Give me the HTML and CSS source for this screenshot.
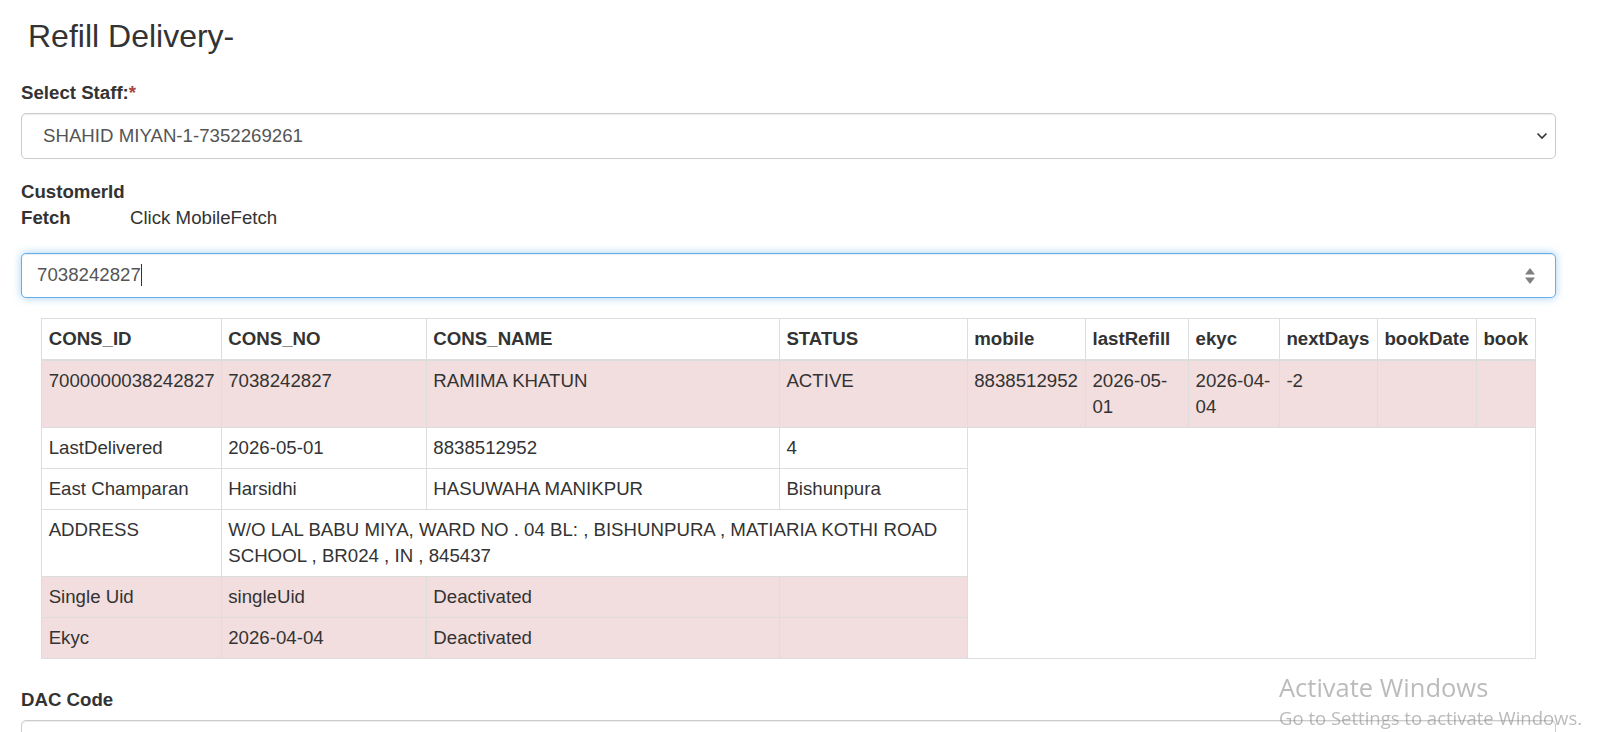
FILE: index.html
```html
<!DOCTYPE html>
<html lang="en">

<head>
    <meta charset="UTF-8">
    <meta name="viewport" content="width=device-width, initial-scale=1.0">
    <title>Refill Delivery</title>
    <link rel="stylesheet" href="styles.css">
</head>

<body>
    <div class="container">
        <h3 class="page-title">Refill Delivery-</h3>

        <div class="form-group">
            <label>Select Staff:<span class="req">*</span></label>
            <div class="select-wrap">
                <select class="form-control">
                    <option>SHAHID MIYAN-1-7352269261</option>
                </select>
                <svg class="select-arrow" width="12" height="8" viewBox="0 0 12 8">
                    <path d="M1.5 1.5 L6 6 L10.5 1.5" fill="none" stroke="#333" stroke-width="1.6" />
                </svg>
            </div>
        </div>

        <div class="fetch-block">
            <label>CustomerId</label>
            <div class="fetch-row">
                <label>Fetch</label>
                <span>Click MobileFetch</span>
            </div>
        </div>

        <div class="form-control focused">
            <span>7038242827</span><span class="caret"></span>
            <svg class="spin" width="12" height="22" viewBox="0 0 12 22">
                <path d="M1 9.5 L6 3 L11 9.5 Z" fill="#808080" />
                <path d="M1 12.5 L6 19 L11 12.5 Z" fill="#808080" />
            </svg>
        </div>

        <div class="table-wrap">
            <table class="cons-table">
                <colgroup>
                    <col style="width: 12.02%">
                    <col style="width: 13.73%">
                    <col style="width: 23.63%">
                    <col style="width: 12.57%">
                    <col style="width: 7.92%">
                    <col style="width: 6.90%">
                    <col style="width: 6.08%">
                    <col style="width: 6.56%">
                    <col style="width: 6.63%">
                    <col style="width: 3.96%">
                </colgroup>
                <thead>
                    <tr>
                        <th>CONS_ID</th>
                        <th>CONS_NO</th>
                        <th>CONS_NAME</th>
                        <th>STATUS</th>
                        <th>mobile</th>
                        <th>lastRefill</th>
                        <th>ekyc</th>
                        <th>nextDays</th>
                        <th>bookDate</th>
                        <th>book</th>
                    </tr>
                </thead>
                <tbody>
                    <tr class="danger">
                        <td>7000000038242827</td>
                        <td>7038242827</td>
                        <td>RAMIMA KHATUN</td>
                        <td>ACTIVE</td>
                        <td>8838512952</td>
                        <td>2026-05-01</td>
                        <td>2026-04-04</td>
                        <td>-2</td>
                        <td></td>
                        <td></td>
                    </tr>
                    <tr>
                        <td>LastDelivered</td>
                        <td>2026-05-01</td>
                        <td>8838512952</td>
                        <td>4</td>
                    </tr>
                    <tr>
                        <td>East Champaran</td>
                        <td>Harsidhi</td>
                        <td>HASUWAHA MANIKPUR</td>
                        <td>Bishunpura</td>
                    </tr>
                    <tr>
                        <td>ADDRESS</td>
                        <td colspan="3">W/O LAL BABU MIYA, WARD NO . 04 BL: , BISHUNPURA , MATIARIA KOTHI ROAD SCHOOL , BR024 , IN , 845437</td>
                    </tr>
                    <tr class="danger">
                        <td>Single Uid</td>
                        <td>singleUid</td>
                        <td>Deactivated</td>
                        <td></td>
                    </tr>
                    <tr class="danger">
                        <td>Ekyc</td>
                        <td>2026-04-04</td>
                        <td>Deactivated</td>
                        <td></td>
                    </tr>
                </tbody>
            </table>
        </div>

        <div class="form-group">
            <label>DAC Code</label>
            <div class="form-control"></div>
        </div>
    </div>

    <div class="watermark">
        <div class="wm-title">Activate Windows</div>
        <div class="wm-sub">Go to Settings to activate Windows.</div>
    </div>
</body>

</html>
```

FILE: styles.css
```css
* {
    margin: 0;
    padding: 0;
    box-sizing: border-box;
}

body {
    font-family: "Liberation Sans", Arial, sans-serif;
    font-size: 18.67px;
    line-height: 26.67px;
    color: #333;
    background-color: white;
    overflow: hidden;
}

.container {
    padding: 0 44px 0 21px;
}

.page-title {
    font-size: 32px;
    font-weight: 400;
    line-height: 35px;
    padding: 19px 0 0 7px;
    margin-bottom: 26px;
}

label {
    display: inline-block;
    font-weight: 700;
    margin-bottom: 6.67px;
}

.req {
    color: #a94442;
}

.form-group {
    margin-bottom: 20px;
}

.form-control {
    display: block;
    width: 100%;
    height: 45.33px;
    padding: 8px 15px;
    font-family: "Liberation Sans", Arial, sans-serif;
    font-size: 18.67px;
    line-height: 26.67px;
    color: #555;
    background-color: white;
    border: 1px solid #ccc;
    border-radius: 5px;
    box-shadow: inset 0 1px 1px rgba(0, 0, 0, 0.075);
}

.select-wrap {
    position: relative;
}

.select-wrap select {
    appearance: none;
    -webkit-appearance: none;
    padding-left: 21px;
}

.select-arrow {
    position: absolute;
    right: 8px;
    top: 19px;
}

.fetch-block {
    margin-bottom: 21px;
}

.fetch-block label {
    display: block;
    margin-bottom: 0;
}

.fetch-row {
    display: flex;
}

.fetch-row label {
    width: 109px;
}

.focused {
    position: relative;
    border-color: #66afe9;
    box-shadow: inset 0 1px 1px rgba(0, 0, 0, 0.075), 0 0 8px rgba(102, 175, 233, 0.6);
}

.caret {
    display: inline-block;
    width: 1px;
    height: 22px;
    background-color: #333;
    vertical-align: -5px;
}

.spin {
    position: absolute;
    right: 19px;
    top: 11px;
}

.table-wrap {
    padding: 20px 20px 28px;
}

.cons-table {
    width: 100%;
    table-layout: fixed;
    border-collapse: collapse;
    border: 1px solid #ddd;
}

.cons-table th,
.cons-table td {
    padding: 6.67px 6.67px 6.4px;
    text-align: left;
    vertical-align: top;
    border: 1px solid #ddd;
}

.cons-table th {
    font-weight: 700;
    white-space: nowrap;
    border-bottom-width: 2px;
}

.cons-table tr.danger td {
    background-color: #f2dede;
}

.watermark {
    position: fixed;
    left: 1279px;
    top: 670px;
    font-family: "Open Sans", "Noto Sans", sans-serif;
    color: rgba(120, 120, 120, 0.5);
}

.wm-title {
    font-size: 25.5px;
    line-height: 34px;
}

.wm-sub {
    font-size: 18.5px;
    line-height: 27px;
}
```
